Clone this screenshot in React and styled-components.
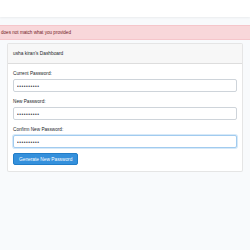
import styled, { createGlobalStyle } from "styled-components";

const GlobalStyle = createGlobalStyle`
  body {
    margin: 0;
    background: #f8fafc;
    font-family: "Liberation Sans", Arial, sans-serif;
    color: #212529;
  }
`;

const Navbar = styled.nav`
  height: 17px;
  background: #fff;
  box-shadow: 0 1px 2px rgba(0, 0, 0, 0.06);
`;

const Main = styled.main`
  padding-top: 8px;
`;

const Alert = styled.div`
  height: 15px;
  padding-left: 1px;
  background: #f8d7da;
  border-top: 1px solid #f5c6cb;
  border-bottom: 1px solid #f5c6cb;
  box-sizing: border-box;
  color: #721c24;
  font-size: 4.6px;
  line-height: 13px;
  white-space: nowrap;
`;

const Card = styled.div`
  margin: 3px 7px 0;
  background: #fff;
  border: 1px solid rgba(0, 0, 0, 0.1);
  border-radius: 2px;
`;

const CardHeader = styled.div`
  height: 19px;
  padding: 0 5px;
  background: #f7f7f7;
  border-bottom: 1px solid rgba(0, 0, 0, 0.1);
  font-size: 4.8px;
  line-height: 19px;
`;

const CardBody = styled.div`
  padding: 6px 5px 6px;
`;

const FormGroup = styled.div`
  margin-bottom: 6px;
`;

const Label = styled.label`
  display: block;
  font-size: 4.7px;
  line-height: 8px;
  margin-bottom: 1px;
`;

const Input = styled.input`
  display: block;
  width: 100%;
  box-sizing: border-box;
  height: 13px;
  padding: 0 3px;
  border: 1px solid ${(p) => (p.$focused ? "#a1cbef" : "#ced4da")};
  box-shadow: ${(p) => (p.$focused ? "0 0 0 1px rgba(52,144,220,0.2)" : "none")};
  border-radius: 2px;
  background: #fff;
  font-family: "Liberation Sans", Arial, sans-serif;
  font-size: 5px;
  letter-spacing: 0.5px;
  color: transparent;
  text-shadow: 0 0 0 #3d4247;
  outline: none;
`;

const Button = styled.button`
  display: block;
  height: 12px;
  margin-top: -1px;
  padding: 0 5px;
  border: 1px solid #227dc7;
  border-radius: 2px;
  background: #3490dc;
  color: #fff;
  font-family: "Liberation Sans", Arial, sans-serif;
  font-size: 4.8px;
`;

const fields = [
  { label: "Current Password:" },
  { label: "New Password:" },
  { label: "Confirm New Password:", focused: true },
];

export default function App() {
  return (
    <>
      <GlobalStyle />
      <Navbar />
      <Main>
        <Alert>does not match what you provided</Alert>
        <Card>
          <CardHeader>usha kiran's Dashboard</CardHeader>
          <CardBody>
            {fields.map((f) => (
              <FormGroup key={f.label}>
                <Label>{f.label}</Label>
                <Input type="password" defaultValue="1234567890" $focused={f.focused} readOnly />
              </FormGroup>
            ))}
            <Button>Generate New Password</Button>
          </CardBody>
        </Card>
      </Main>
    </>
  );
}
